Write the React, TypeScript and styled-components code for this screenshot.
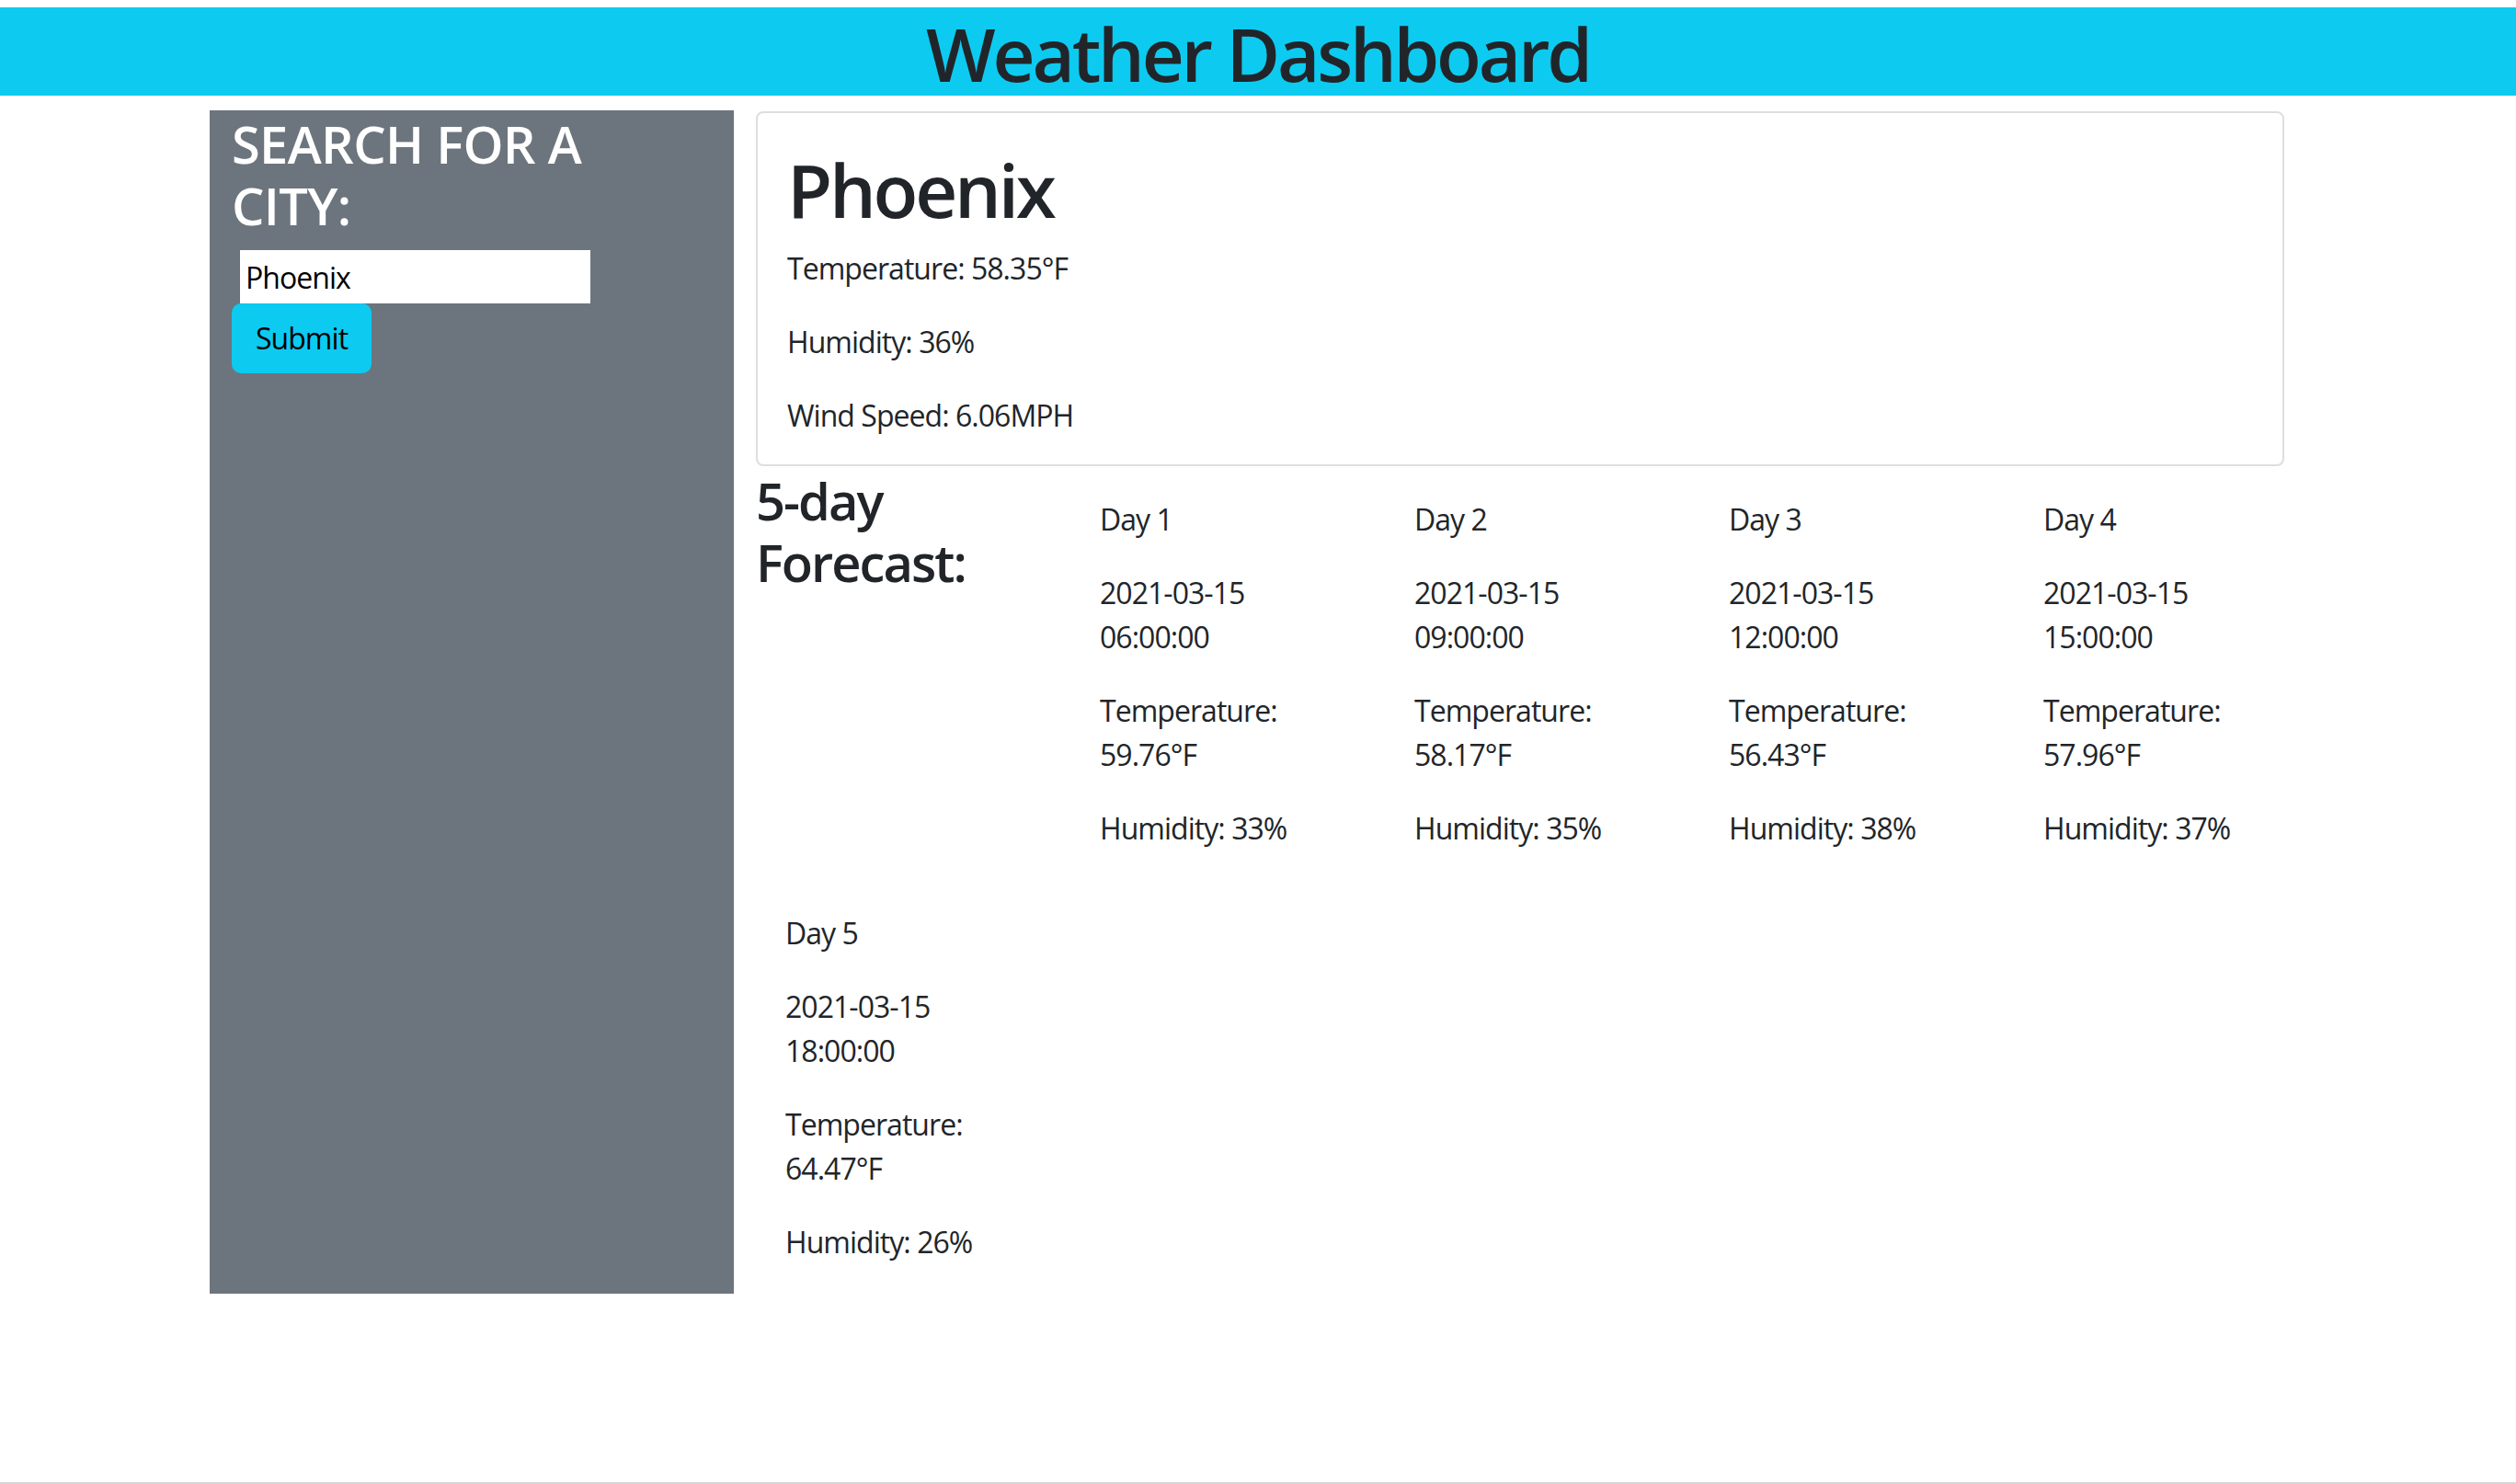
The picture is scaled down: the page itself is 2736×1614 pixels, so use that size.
import React from "react";
import styled, { createGlobalStyle } from "styled-components";

const GlobalStyle = createGlobalStyle`
  html, body { margin: 0; padding: 0; background: #fff; }
  body {
    font-family: "Open Sans", "Noto Sans", sans-serif;
    color: #212529;
    font-size: 32px;
    line-height: 1.5;
    letter-spacing: -0.03em;
  }
  *, *::before, *::after { box-sizing: border-box; }
`;

const Page = styled.div`
  min-height: 1614px;
  display: flex;
  flex-direction: column;
  padding-top: 8px;
`;

const Header = styled.h1`
  margin: 0 0 16px;
  padding-top: 3px;
  background: #0dcaf0;
  text-align: center;
  font-size: 80px;
  font-weight: 600;
  letter-spacing: -0.04em;
  line-height: 93px;
`;

const Container = styled.div`
  width: 2280px;
  margin: 0 auto;
  display: flex;
  align-items: stretch;
`;

const Sidebar = styled.aside`
  width: 570px;
  flex: none;
  background: #6c757d;
  padding: 0 24px;
`;

const SidebarTitle = styled.h3`
  max-width: 470px;
  margin: 0 0 15px;
  padding-top: 3px;
  color: #fff;
  font-size: 56px;
  font-weight: 600;
  letter-spacing: -0.012em;
  line-height: 1.2;
`;

const SearchForm = styled.form`
  display: flex;
  flex-direction: column;
  align-items: flex-start;
`;

const CityInput = styled.input`
  width: 381px;
  height: 58px;
  margin-left: 9px;
  border: none;
  outline: none;
  padding: 0 6px;
  font: inherit;
  font-size: 32px;
  letter-spacing: -0.03em;
  color: #000;
  background: #fff;
`;

const SubmitButton = styled.button`
  height: 76px;
  padding: 0 24px;
  background: #0dcaf0;
  border: 2px solid #0dcaf0;
  border-radius: 10px;
  color: #000;
  font: inherit;
  font-size: 32px;
  line-height: 48px;
  letter-spacing: -0.03em;
  cursor: pointer;
`;

const Main = styled.main`
  flex: 1;
  min-width: 0;
  padding: 0 24px;
`;

const CurrentCard = styled.section`
  margin-top: 1px;
  border: 2px solid #dedede;
  border-radius: 8px;
  padding: 31px 32px 29px;
`;

const CityName = styled.h1`
  margin: 0 0 14px;
  padding-top: 4px;
  font-size: 80px;
  font-weight: 600;
  letter-spacing: -0.04em;
  line-height: 96px;
`;

const Stat = styled.p`
  margin: 0 0 32px;
  &:last-child { margin-bottom: 0; }
`;

const ForecastRow = styled.div`
  margin: 0 -24px;
  display: grid;
  grid-template-columns: repeat(5, 1fr);
`;

const ForecastTitle = styled.h3`
  margin: 0;
  padding: 4px 24px 0;
  font-size: 56px;
  font-weight: 600;
  letter-spacing: -0.035em;
  line-height: 1.2;
`;

const DayCol = styled.div`
  padding: 34px 56px 0;
`;

const DayLine = styled.p`
  margin: 0 0 32px;
`;

const BottomEdge = styled.div`
  margin-top: auto;
  height: 2px;
  background: #d6d6d6;
`;

const forecast = [
  { day: "Day 1", date: "2021-03-15 06:00:00", temp: "59.76°F", hum: "33%" },
  { day: "Day 2", date: "2021-03-15 09:00:00", temp: "58.17°F", hum: "35%" },
  { day: "Day 3", date: "2021-03-15 12:00:00", temp: "56.43°F", hum: "38%" },
  { day: "Day 4", date: "2021-03-15 15:00:00", temp: "57.96°F", hum: "37%" },
  { day: "Day 5", date: "2021-03-15 18:00:00", temp: "64.47°F", hum: "26%" },
];

export default function App() {
  return (
    <Page>
      <GlobalStyle />
      <Header>Weather Dashboard</Header>
      <Container>
        <Sidebar>
          <SidebarTitle>SEARCH FOR A CITY:</SidebarTitle>
          <SearchForm onSubmit={(e) => e.preventDefault()}>
            <CityInput type="text" defaultValue="Phoenix" />
            <SubmitButton type="submit">Submit</SubmitButton>
          </SearchForm>
        </Sidebar>
        <Main>
          <CurrentCard>
            <CityName>Phoenix</CityName>
            <Stat>Temperature: 58.35°F</Stat>
            <Stat>Humidity: 36%</Stat>
            <Stat>Wind Speed: 6.06MPH</Stat>
          </CurrentCard>
          <ForecastRow>
            <ForecastTitle>5-day Forecast:</ForecastTitle>
            {forecast.map((f) => (
              <DayCol key={f.day}>
                <DayLine>{f.day}</DayLine>
                <DayLine>{f.date}</DayLine>
                <DayLine>Temperature: {f.temp}</DayLine>
                <DayLine>Humidity: {f.hum}</DayLine>
              </DayCol>
            ))}
          </ForecastRow>
        </Main>
      </Container>
      <BottomEdge />
    </Page>
  );
}
